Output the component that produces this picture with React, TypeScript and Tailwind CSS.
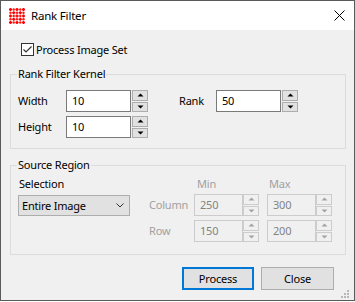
import React from "react";

const Up = ({ c }: { c: string }) => (
  <svg width="7" height="4" viewBox="0 0 7 4"><path d="M0.5 3.5 L3.5 0.5 L6.5 3.5 Z" fill={c} /></svg>
);
const Down = ({ c }: { c: string }) => (
  <svg width="7" height="4" viewBox="0 0 7 4"><path d="M0.5 0.5 L3.5 3.5 L6.5 0.5 Z" fill={c} /></svg>
);

function Spin({ disabled }: { disabled?: boolean }) {
  const b = disabled
    ? "flex-1 border border-[#cccccc] bg-[#f0f0f0] flex items-center justify-center"
    : "flex-1 border border-[#adadad] bg-[#e1e1e1] flex items-center justify-center";
  const c = disabled ? "#a3a3a3" : "#000000";
  return (
    <div className="flex flex-col gap-[1px] w-[16px] h-[22px]">
      <div className={b}><Up c={c} /></div>
      <div className={b}><Down c={c} /></div>
    </div>
  );
}

function NumField({ value, disabled, w }: { value: string; disabled?: boolean; w: number }) {
  return (
    <div className="flex items-start">
      <div
        className={
          disabled
            ? "h-[22px] border border-[#cccccc] bg-[#f0f0f0] flex items-center pl-[5px] text-[#838383]"
            : "h-[22px] border border-[#7a7a7a] bg-white flex items-center pl-[5px] text-black"
        }
        style={{ width: w }}
      >
        {value}
      </div>
      <div className={disabled ? "ml-0" : "ml-[1px]"}>
        <Spin disabled={disabled} />
      </div>
    </div>
  );
}

function Logo() {
  const dots: React.ReactElement[] = [];
  for (let i = 0; i < 5; i++) {
    for (let j = 0; j < 5; j++) {
      const x = 1.5 + i * 3.25;
      const y = 1.5 + j * 3.25;
      if ((i + j) % 2 === 0) {
        dots.push(
          <path key={`${i}-${j}`} d={`M${x - 1.6} ${y} H${x + 1.6} M${x} ${y - 1.6} V${y + 1.6}`} stroke="#ff0000" strokeWidth="1.6" />
        );
      } else {
        dots.push(<circle key={`d${i}-${j}`} cx={x} cy={y} r="1.2" fill="#ff1a1a" />);
      }
    }
  }
  return (
    <svg width="16" height="16" viewBox="0 0 16 16">
      {dots}
    </svg>
  );
}

export default function App() {
  return (
    <div className="w-[355px] h-[302px] bg-white">
      <div className="relative w-[355px] h-[301px] border border-[#5a5a5a] flex flex-col font-['Noto_Sans',sans-serif] text-[11px] leading-[16px] text-black tracking-[-0.2px]">
        {/* Title bar */}
        <div className="h-[29px] bg-white flex items-center pl-[8px] shrink-0">
          <Logo />
          <span className="ml-[6px] text-[11.5px]">Rank Filter</span>
          <svg className="ml-auto mr-[9px]" width="11" height="11" viewBox="0 0 11 11">
            <path d="M0.5 0.5 L10.5 10.5 M10.5 0.5 L0.5 10.5" stroke="#000" strokeWidth="1" />
          </svg>
        </div>

        {/* Body */}
        <div className="flex-1 bg-[#f0f0f0] flex flex-col">
          {/* Checkbox */}
          <div className="mt-[13px] ml-[20px] flex items-center h-[13px]">
            <div className="w-[13px] h-[13px] border border-[#333333] bg-white flex items-center justify-center">
              <svg width="11" height="11" viewBox="0 0 11 11">
                <path d="M1.5 5.5 L4 8 L9.5 2.5" stroke="#333" strokeWidth="1.2" fill="none" />
              </svg>
            </div>
            <span className="ml-[2px]">Process Image Set</span>
          </div>

          {/* Rank Filter Kernel */}
          <fieldset className="mt-[10px] ml-[9px] w-[336px] border border-[#dcdcdc] pl-[6px] pb-[10px] pt-0 pr-0">
            <legend className="px-[1px] h-[16px]">Rank Filter Kernel</legend>
            <div className="mt-[8px] flex items-center">
              <span className="w-[49px] pl-[1px]">Width</span>
              <NumField value="10" w={65} />
              <span className="ml-[31px] w-[37px]">Rank</span>
              <NumField value="50" w={65} />
            </div>
            <div className="mt-[4px] flex items-center">
              <span className="w-[49px] pl-[1px]">Height</span>
              <NumField value="10" w={65} />
            </div>
          </fieldset>

          {/* Source Region */}
          <fieldset className="mt-[8px] ml-[9px] w-[336px] border border-[#dcdcdc] pl-[6px] pb-[12px] pt-0 pr-0">
            <legend className="px-[1px] h-[16px]">Source Region</legend>
            <div className="mt-[3px] flex">
              <div className="ml-[1px] w-[112px] flex flex-col">
                <span className="pl-[1px] h-[16px]">Selection</span>
                <div className="mt-[3px] h-[21px] w-[112px] border border-[#adadad] bg-[#e1e1e1] flex items-center pl-[3px] pr-[5px]">
                  <span>Entire Image</span>
                  <svg className="ml-auto" width="8" height="5" viewBox="0 0 8 5">
                    <path d="M0.5 0.5 L4 4 L7.5 0.5" stroke="#333" strokeWidth="1" fill="none" />
                  </svg>
                </div>
              </div>
              <div className="ml-[19px] flex flex-col text-[#a0a0a0]">
                <div className="flex h-[16px]">
                  <span className="w-[45px]" />
                  <span className="w-[65px] pl-[3px]">Min</span>
                  <span className="ml-[8px] w-[65px] pl-[2px]">Max</span>
                </div>
                <div className="mt-[2px] flex items-center">
                  <span className="w-[45px]">Column</span>
                  <NumField value="250" w={49} disabled />
                  <div className="ml-[8px]"><NumField value="300" w={49} disabled /></div>
                </div>
                <div className="mt-[4px] flex items-center">
                  <span className="w-[45px]">Row</span>
                  <NumField value="150" w={49} disabled />
                  <div className="ml-[8px]"><NumField value="200" w={49} disabled /></div>
                </div>
              </div>
            </div>
          </fieldset>

          {/* Buttons */}
          <div className="mt-[12px] flex justify-end gap-[7px] pr-[20px]">
            <button className="w-[72px] h-[23px] border-2 border-[#0078d7] bg-[#e1e1e1] flex items-center justify-center">Process</button>
            <button className="w-[73px] h-[23px] border border-[#adadad] bg-[#e1e1e1] flex items-center justify-center">Close</button>
          </div>
        </div>

        {/* size grip */}
        <svg className="absolute right-[4px] bottom-[1px]" width="9" height="9" viewBox="0 0 9 9">
          <rect x="6" y="0" width="2" height="2" fill="#b8b8b8" />
          <rect x="3" y="3" width="2" height="2" fill="#b8b8b8" />
          <rect x="6" y="3" width="2" height="2" fill="#b8b8b8" />
          <rect x="0" y="6" width="2" height="2" fill="#b8b8b8" />
          <rect x="3" y="6" width="2" height="2" fill="#b8b8b8" />
          <rect x="6" y="6" width="2" height="2" fill="#b8b8b8" />
        </svg>
      </div>
    </div>
  );
}
